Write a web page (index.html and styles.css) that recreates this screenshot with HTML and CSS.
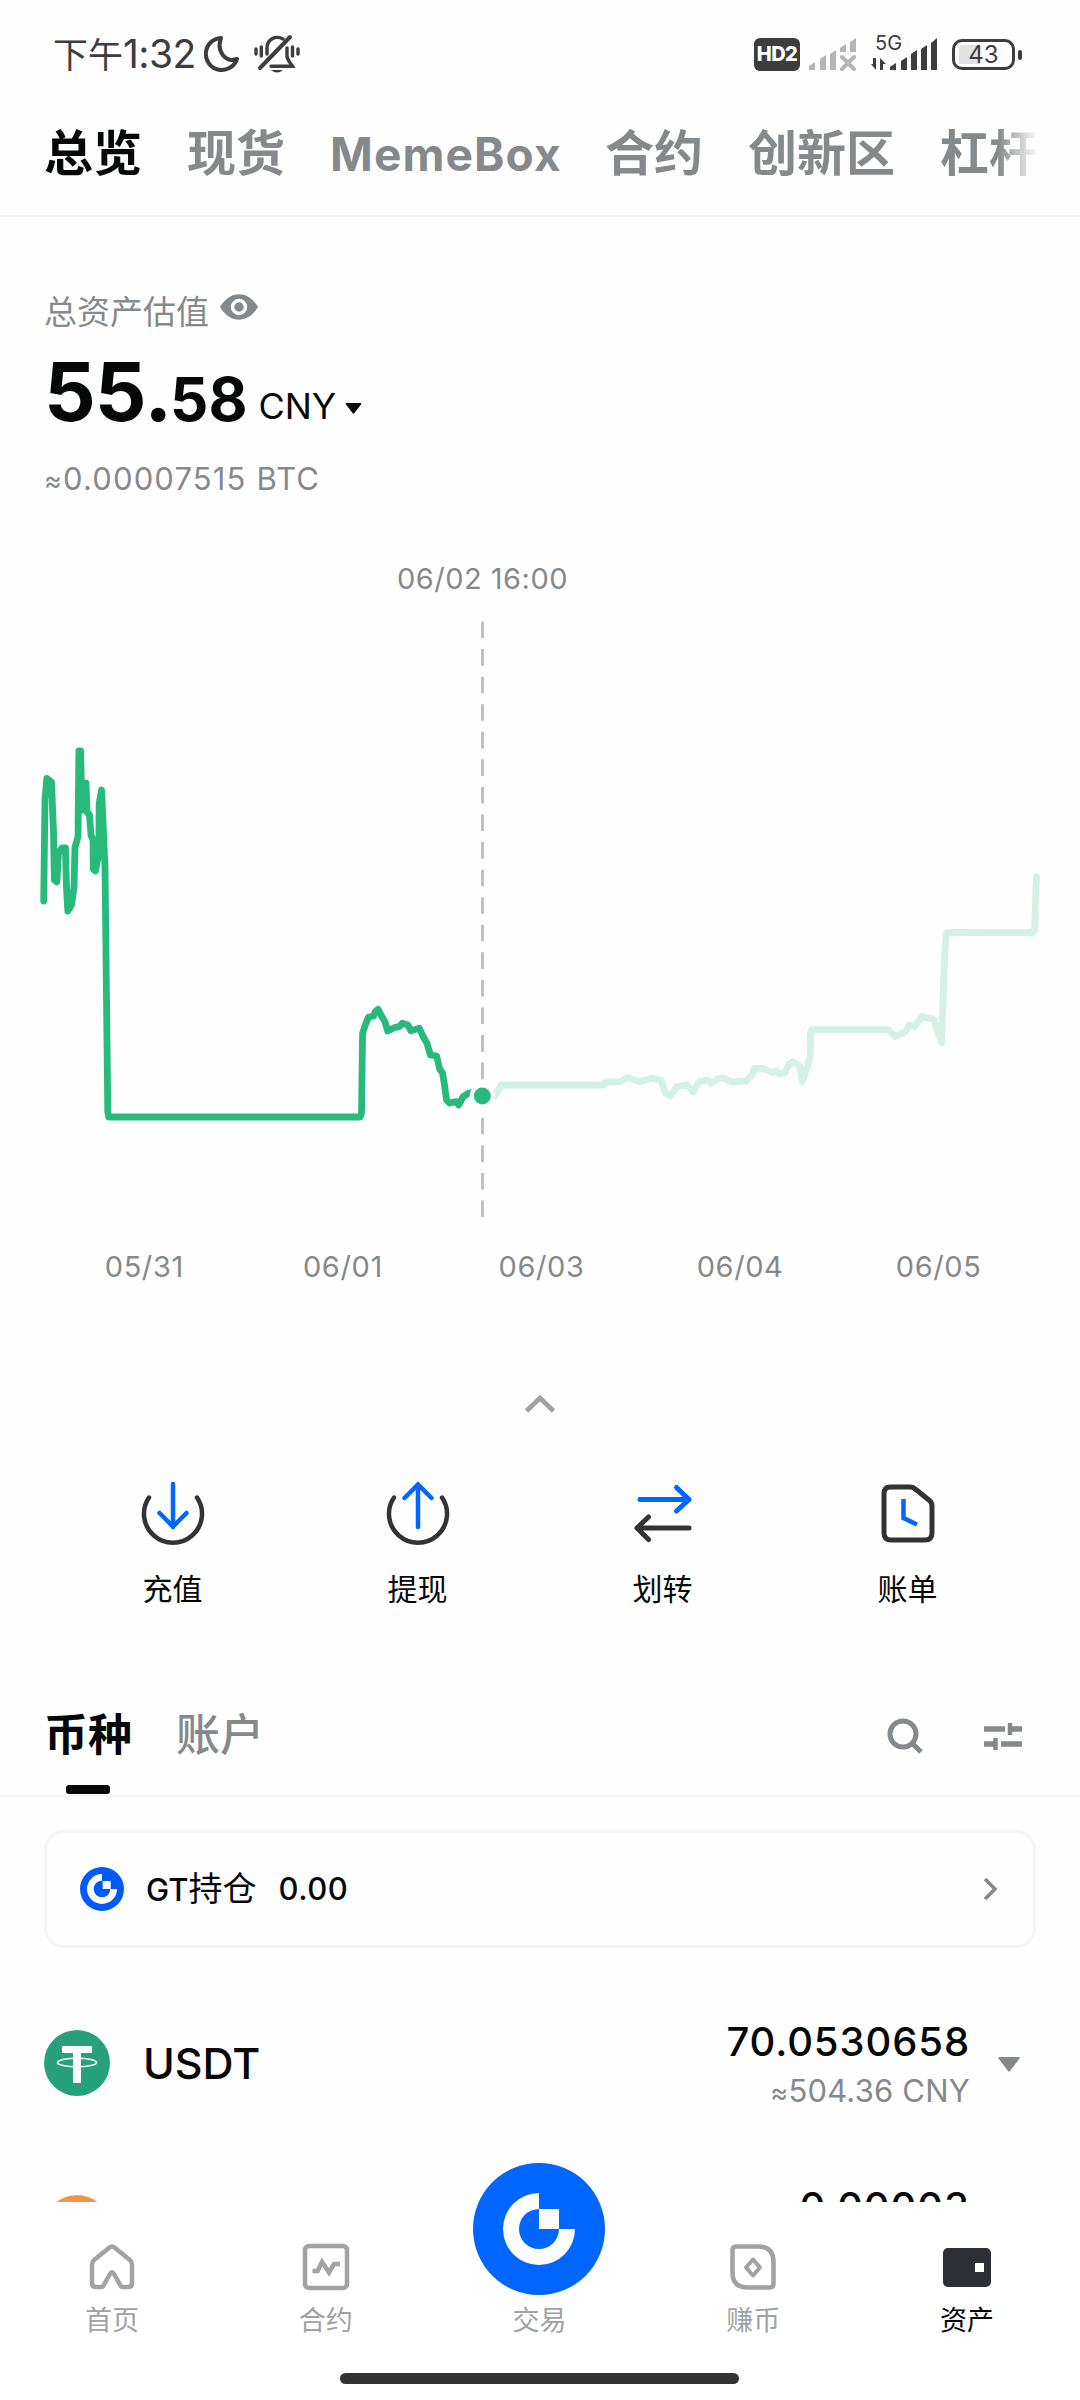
FILE: index.html
```html
<!DOCTYPE html>
<html lang="zh-CN">
<head>
<meta charset="utf-8">
<title>资产总览</title>
<link rel="stylesheet" href="styles.css">
</head>
<body>
<div class="screen">
  <header class="status">
    <span class="status-time">下午<span class="clock">1:32</span></span>
    <svg class="moon" width="36" height="38" viewBox="0 0 36 38"><path d="M17 3A16 16 0 1 0 33 24C22 28 12 17 17 3Z" fill="none" stroke="#3d3d3d" stroke-width="4" stroke-linejoin="round"/></svg>
    <svg class="bell" width="46" height="40" viewBox="0 0 46 40"><g fill="none" stroke="#3d3d3d" stroke-width="3.4" stroke-linecap="round"><path d="M2 15v5M7.300 13v9M44 15v5M38.500 13v9"/><path d="M13 20V14C13 5 22 1 29 5M33 14v8c0 4 3 6 5.500 10.200H17"/><path d="M36 3 6 34" stroke-width="4"/></g><path d="M17 36h12q-6 5-12 0z" fill="#3d3d3d"/></svg>
    <div class="status-right">
      <span class="hd">HD2</span>
      <svg width="50" height="34" viewBox="0 0 50 34"><g fill="#b5b5b5"><path d="M1 29l6-4v8H1zM12 22l6-4v15h-6zM22 17l6-4v20h-6zM32 11l6-4v8h-6zM42 5l6-4v14h-6z"/></g><path d="M34 20l12 12M46 20 34 32" stroke="#b5b5b5" stroke-width="4" stroke-linecap="round"/></svg>
      <span class="net">
        <span class="net-label">5G</span>
        <svg width="68" height="34" viewBox="0 0 68 34"><g fill="#3d3d3d"><path d="M5 21v12L0 27h2v-6zM9 21l6 6h-3v6H9zM19 30l6-4v7h-6zM30 24l6-4v13h-6zM40 17l6-4v20h-6zM50 12l6-4v25h-6zM60 6l6-5v32h-6z"/></g></svg>
      </span>
      <span class="battery"><span class="battery-text">43</span></span>
    </div>
  </header>

  <nav class="tabs">
    <span class="tab active">总览</span>
    <span class="tab">现货</span>
    <span class="tab latin">MemeBox</span>
    <span class="tab">合约</span>
    <span class="tab">创新区</span>
    <span class="tab">杠杆</span>
  </nav>

  <main class="content">
    <section class="summary">
      <div class="summary-label">总资产估值
        <svg width="38" height="26" viewBox="0 0 38 26"><path d="M0 13C10-4 28-4 38 13 28 30 10 30 0 13Z" fill="#86898c"/><circle cx="19" cy="13" r="6.500" fill="#86898c" stroke="#fefefe" stroke-width="3.500"/></svg>
      </div>
      <div class="total">
        <span class="int">55</span><span class="dot">.</span><span class="dec">58</span><span class="cur">CNY</span>
        <svg width="17" height="11" viewBox="0 0 17 11"><path d="M1.500 0h14q1.500 0 .5 1.500L9.500 10q-1 1.200-2 0L1 1.500Q0 0 1.500 0z" fill="#060808"/></svg>
      </div>
      <div class="btc"><span class="approx">≈</span>0.00007515 BTC</div>
    </section>

    <section class="chart">
      <div class="chart-date">06/02 16:00</div>
      <svg class="plot" width="1080" height="620" viewBox="0 610 1080 620">
        <path d="M482.500 621.500V1217" stroke="#bbbdc3" stroke-width="2.800" stroke-dasharray="16.600 10.970"/>
        <path class="line rest" d="M494.300 1096.700 501.200 1085 603.300 1085 605.300 1082 619.600 1081.700 627.800 1077.700 640 1081.700 652 1078.300 661.200 1080 665.300 1093.300 670.600 1095.700 676.700 1086.700 687 1085 693 1091.700 699.200 1081.700 707.300 1080 711.400 1083.300 717.600 1078.700 723.700 1078 731.800 1082 746 1081 752.200 1075 754.300 1068.300 762.400 1068.300 772.700 1072.700 776 1071 780 1074 785 1072.700 789 1064 793 1061.700 800 1066 802.400 1081.700 807.300 1066.700 810.200 1056.700 810.600 1031.700 812.200 1029.700 888.200 1029.700 895 1036.700 905.300 1031.700 909.400 1025 914.700 1026.700 921.600 1016.700 934 1019.300 938 1033.300 941.600 1042.700 944 970 946.100 934 947.500 932.500 1032.700 932.700 1034.500 930 1036.500 876.700"/>
        <path class="line past" d="M43.700 901 45 800 46.800 778.500 51.500 782 53.500 833 54.400 880 56.800 882 58.500 853 62 848 65.400 848 66.500 887 67.800 911 71.600 905 74 887 75 847 78 837 78.900 751 80.600 751 82 810 86 783 87 812 89.500 815 91 835 93 840 93.300 869 95.400 871 98.800 853 99.200 803 101.600 790 105 867 107.800 1112 108.800 1117 360 1117 361.500 1113 362.600 1033 365.700 1024 368.500 1017 373.600 1016 375.300 1011.600 378.100 1009.300 381.500 1016 385 1021.700 387.700 1031 394.300 1027.700 399.400 1026.700 402.200 1023.300 408 1025 410.800 1030.700 419.400 1028.300 423.500 1037.300 427 1043.300 430.400 1055 436.600 1056 439.700 1069 442.500 1073 444.200 1083 446.600 1100 449.400 1103 456.300 1101.700 458.700 1105 463.200 1096.700 468.300 1093.300 473 1092.300"/>
        <circle cx="482.300" cy="1096" r="10.500" fill="#28b97c" stroke="#fefefe" stroke-width="4"/>
      </svg>
      <div class="axis"><span>05/31</span><span>06/01</span><span>06/03</span><span>06/04</span><span>06/05</span></div>
    </section>

    <div class="collapse"><svg width="32" height="20" viewBox="0 0 32 20"><path d="M2.500 17 16 4l13.500 13" fill="none" stroke="#9fa1a2" stroke-width="4.800"/></svg></div>

    <section class="actions">
      <div class="action">
        <svg width="66" height="66" viewBox="0 0 66 66" fill="none" stroke-width="4.500" stroke-linecap="round"><path d="M9 17.500A29 29 0 1 0 57 17.500" stroke="#333"/><path d="M33 4v43M19.500 33 33 46.500 46.500 33" stroke="#06f"/></svg>
        <span>充值</span>
      </div>
      <div class="action">
        <svg width="66" height="66" viewBox="0 0 66 66" fill="none" stroke-width="4.500" stroke-linecap="round"><path d="M9 17.500A29 29 0 1 0 57 17.500" stroke="#333"/><path d="M33 47V5M19.500 18 33 4.500 46.500 18" stroke="#06f"/></svg>
        <span>提现</span>
      </div>
      <div class="action">
        <svg width="66" height="66" viewBox="0 0 66 66" fill="none" stroke-width="5" stroke-linecap="round" stroke-linejoin="round"><path d="M10 19.500h49M46.500 7.500 59 19.500 46.500 31" stroke="#06f"/><path d="M59 48H7M18.500 37 7 48l11.500 11.500" stroke="#333"/></svg>
        <span>划转</span>
      </div>
      <div class="action">
        <svg width="66" height="66" viewBox="0 0 66 66" fill="none" stroke-width="5"><path d="M15 7h20q3 0 5 1.800L54.500 20.500Q57 22.500 57 26v27q0 7-7 7H16q-7 0-7-7V14q0-7 6-7Z" stroke="#333"/><path d="M28.500 19v19L42 44.500" stroke="#06f" stroke-width="4.500"/></svg>
        <span>账单</span>
      </div>
    </section>

    <section class="asset-tabs">
      <span class="asset-tab current">币种</span>
      <span class="asset-tab">账户</span>
      <div class="tools">
        <svg width="36" height="36" viewBox="0 0 36 36" fill="none" stroke="#86898c" stroke-width="5"><circle cx="16" cy="16" r="13"/><path d="M25 25l9 9"/></svg>
        <svg width="38" height="30" viewBox="0 0 38 30" fill="none" stroke="#86898c"><path d="M0 8h21M26 8h12M0 23h11M17 23h21" stroke-width="5.500"/><path d="M26 2v12M11.500 17v12" stroke-width="4.500"/></svg>
      </div>
    </section>

    <section class="gt-card">
      <svg width="44" height="44" viewBox="-66 -66 132 132"><circle r="66" fill="#0059fb"/><path d="M0-45V-25A25 25 0 1 0 25 0H45A45 45 0 1 1 0-45Z" fill="#fff"/><path d="M2-24h24V0H2z" fill="#fff"/></svg>
      <span class="gt-name"><span class="gt">GT</span>持仓</span>
      <span class="gt-value">0.00</span>
      <svg class="go" width="16" height="26" viewBox="0 0 16 26"><path d="M3 3l10 10L3 23" fill="none" stroke="#86898c" stroke-width="3.500"/></svg>
    </section>

    <section class="coin">
      <svg width="66" height="66" viewBox="0 0 66 66"><circle cx="33" cy="33" r="33" fill="#26a17b"/><path d="M18 16h30v7H37v30h-8V23H18z" fill="#fff"/><ellipse cx="33" cy="32.500" rx="19.500" ry="4.300" fill="none" stroke="#fff" stroke-width="1.600"/></svg>
      <span class="coin-name">USDT</span>
      <div class="amount"><span class="qty">70.0530658</span><span class="fiat"><span class="approx">≈</span>504.36 CNY</span></div>
      <svg class="more" width="22" height="15" viewBox="0 0 22 15"><path d="M1 0h20q1 0 .5 1.500L12 14q-1 1.200-2 0L.5 1.500Q0 0 1 0z" fill="#86898c"/></svg>
    </section>

    <section class="coin next">
      <span class="btc-logo"></span>
      <div class="amount"><span class="qty">0.00003</span></div>
    </section>
  </main>

  <footer class="bottom">
    <div class="nav-item">
      <svg width="50" height="50" viewBox="0 0 50 50" fill="none" stroke="#a0a2a3" stroke-width="4.500" stroke-linejoin="round"><path d="M5 22.500Q5 20 7 18L22.500 5.500q2.500-2 5 0L43 18q2 2 2 4.500V41q0 4-4 4h-5.500q-1.500 0-2-1.500L27 32q-2-3.500-4 0l-6.500 11.500q-.5 1.500-2 1.500H9q-4 0-4-4Z"/></svg>
      <span>首页</span>
    </div>
    <div class="nav-item">
      <svg width="50" height="50" viewBox="0 0 50 50" fill="none" stroke="#a0a2a3" stroke-width="4.500"><rect x="4" y="4" width="42" height="42" rx="4"/><path d="M11.500 29h5L21 20l7 10.500 5-8.500H39"/></svg>
      <span>合约</span>
    </div>
    <div class="nav-item">
      <svg class="trade" width="132" height="132" viewBox="-66 -66 132 132"><circle r="66" fill="#06f"/><path d="M0-36V-20A20 20 0 1 0 20 0H36A36 36 0 1 1 0-36Z" fill="#fff"/><path d="M0-20h20V0H0z" fill="#fff"/></svg>
      <span>交易</span>
    </div>
    <div class="nav-item">
      <svg width="50" height="50" viewBox="0 0 50 50" fill="none" stroke="#a0a2a3" stroke-width="4.500"><path d="M8 4.500h22Q45.500 4.500 45.500 20v21.500q0 4-4 4H20Q4.500 45.500 4.500 31V8.500q0-4 3.500-4Z"/><path d="M25 17.500l7 8-7 8-7-8z" stroke-width="4" stroke-linejoin="round"/></svg>
      <span>赚币</span>
    </div>
    <div class="nav-item selected">
      <svg width="50" height="50" viewBox="0 0 50 50"><rect x="1" y="6" width="48" height="39" rx="5" fill="#2d2f34"/><path d="M33 21h9v9h-9z" fill="#fff"/></svg>
      <span>资产</span>
    </div>
    <div class="home-bar"></div>
  </footer>
</div>
</body>
</html>
```
FILE: styles.css
```css
* { box-sizing: border-box; }
body {
  margin: 0;
  background: #fefefe;
  color: #060808;
  font-family: Inter, "Noto Sans CJK SC", sans-serif;
}
svg { display: block; flex: none; }
.screen {
  width: 1080px;
  height: 2400px;
  overflow: hidden;
  display: flex;
  flex-direction: column;
  white-space: nowrap;
}

/* Status bar */
.status {
  height: 108px;
  display: flex;
  align-items: center;
  padding: 0 58px 0 53px;
  color: #3d3d3d;
}
.status-time { width: 142px; font-size: 35px; line-height: 40px; }
.clock { font-size: 39px; font-weight: 400; letter-spacing: -0.6px; }
.moon { margin-left: 9px; }
.bell { margin-left: 14px; }
.status-right { display: flex; align-items: center; margin-left: auto; }
.hd {
  width: 46px;
  height: 33px;
  margin-right: 8px;
  border-radius: 6px;
  background: #3d3d3d;
  color: #fff;
  font-size: 20px;
  font-weight: 800;
  line-height: 33px;
  text-align: center;
  letter-spacing: -0.5px;
}
.net { position: relative; margin: 0 13px; }
.net-label { position: absolute; left: 4px; top: -5px; font-size: 20px; line-height: 22px; }
.battery {
  position: relative;
  width: 63px;
  height: 31px;
  margin-right: 7px;
  border: 3px solid #3d3d3d;
  border-radius: 10px;
  background: linear-gradient(#e2e2e2, #e2e2e2) 4px 3px / 21px 19px no-repeat;
  text-align: center;
}
.battery::after {
  content: "";
  position: absolute;
  right: -10px;
  top: 8px;
  width: 4px;
  height: 10px;
  border-radius: 2px;
  background: #3d3d3d;
}
.battery-text { display: block; font-size: 24px; line-height: 26px; }

/* Account tabs */
.tabs {
  position: relative;
  height: 109px;
  display: flex;
  gap: 45px;
  padding-left: 44px;
  border-bottom: 2px solid #f3f4f5;
  overflow: hidden;
  font-size: 49px;
  font-weight: 700;
  line-height: 91px;
  color: #86898c;
}
.tabs::after {
  content: "";
  position: absolute;
  right: 0;
  top: 0;
  width: 82px;
  height: 100px;
  background: linear-gradient(90deg, rgba(254, 254, 254, 0), #fefefe 40px);
}
.tab.active { color: #060808; }
.tab.latin { width: 230px; font-size: 46px; font-weight: 650; letter-spacing: 1.1px; line-height: 92px; }

.content { flex: none; height: 1985px; overflow: hidden; }

/* Balance */
.summary { height: 341px; padding: 68px 45px 0 44px; }
.summary-label {
  display: flex;
  align-items: center;
  gap: 11px;
  height: 50px;
  font-size: 33px;
  color: #86898c;
}
.summary-label svg { margin-top: -7px; }
.total { display: flex; align-items: baseline; height: 96px; margin-top: 9px; line-height: 96px; font-weight: 650; }
.int { font-size: 81px; letter-spacing: -1px; }
.dot { margin-left: -1px; font-size: 78px; font-weight: 800; line-height: 80px; }
.dec { margin-left: -2px; font-size: 60px; }
.cur { margin-left: 11px; font-size: 36px; font-weight: 400; line-height: 80px; transform: translateY(-2px); }
.total svg { margin-left: 9px; transform: translateY(-7px); }
.btc { margin-top: 19px; font-size: 31px; line-height: 40px; letter-spacing: 1.15px; color: #86898c; }
.approx { font-size: 27px; }

/* Chart */
.chart { height: 734px; color: #86898c; font-size: 29px; line-height: 42px; letter-spacing: 0.6px; }
.chart-date { width: 965px; height: 40px; letter-spacing: 0.5px; text-align: center; }
.plot { margin-top: 12px; }
.line { fill: none; stroke-width: 6.8; stroke-linejoin: round; }
.past { stroke: #28b97c; stroke-linecap: round; }
.rest { stroke: #d3f1e4; stroke-linecap: round; }
.axis { display: grid; grid-template-columns: repeat(5, 198.6px); margin: 16px 0 0 45px; text-align: center; }
.collapse { height: 188px; padding: 102px 0 0 524px; }

/* Quick actions */
.actions { display: grid; grid-template-columns: repeat(4, 245px); justify-content: center; height: 200px; }
.action { display: flex; flex-direction: column; align-items: center; gap: 21px; font-size: 30px; line-height: 44px; }

/* Asset list */
.asset-tabs {
  height: 117px;
  display: flex;
  gap: 44px;
  padding: 0 58px 0 44px;
  border-bottom: 2px solid #f3f4f5;
  font-size: 44px;
  line-height: 111px;
}
.asset-tab { color: #86898c; font-weight: 500; }
.current { position: relative; color: #060808; font-weight: 700; }
.current::after {
  content: "";
  position: absolute;
  left: 22px;
  bottom: 1px;
  width: 44px;
  height: 9px;
  border-radius: 3px;
  background: #060808;
}
.tools { display: flex; align-items: center; gap: 61px; height: 112px; margin-left: auto; }
.gt-card {
  display: flex;
  align-items: center;
  height: 118px;
  margin: 33px 44px 0;
  padding: 0 35px 0 33px;
  border: 3px solid #f5f6f7;
  border-radius: 20px;
  font-size: 34px;
}
.gt-name { margin-left: 22px; line-height: 46px; }
.gt { font-size: 31px; font-weight: 500; }
.gt-value { margin-left: 22px; font-size: 31px; font-weight: 500; letter-spacing: 0.5px; transform: translateY(-1px); }
.go { margin-left: auto; }
.coin { display: flex; align-items: center; height: 166px; margin-top: 32px; padding-left: 44px; }
.coin-name { margin-left: 33px; font-size: 43px; font-weight: 450; line-height: 52px; }
.amount { display: flex; flex-direction: column; align-items: flex-end; margin-left: auto; }
.coin .amount { padding-top: 5px; }
.qty { font-size: 40px; font-weight: 500; line-height: 52px; letter-spacing: 0.9px; }
.fiat { font-size: 31px; line-height: 46px; letter-spacing: 0.2px; color: #86898c; }
.more { margin: 2px 60px 0 28px; }
.coin.next { margin-top: 1px; padding-right: 110px; align-items: flex-start; padding-top: 48px; }
.coin.next .amount { margin-top: -14px; padding-top: 0; }
.btc-logo { width: 66px; height: 66px; border-radius: 50%; background: #ed9447; }

/* Bottom navigation */
.bottom {
  position: relative;
  flex: none;
  height: 198px;
  display: grid;
  grid-template-columns: repeat(5, 213.8px);
  padding: 40px 0 0 5px;
  background: #fff;
}
.nav-item {
  display: flex;
  flex-direction: column;
  align-items: center;
  gap: 9px;
  height: 110px;
  font-size: 27px;
  line-height: 40px;
  color: #a0a2a3;
}
.trade { margin: -79px 0 -3px; }
.selected { color: #060808; }
.home-bar {
  position: absolute;
  left: 340px;
  bottom: 16px;
  width: 399px;
  height: 11px;
  border-radius: 6px;
  background: #333;
}
```
